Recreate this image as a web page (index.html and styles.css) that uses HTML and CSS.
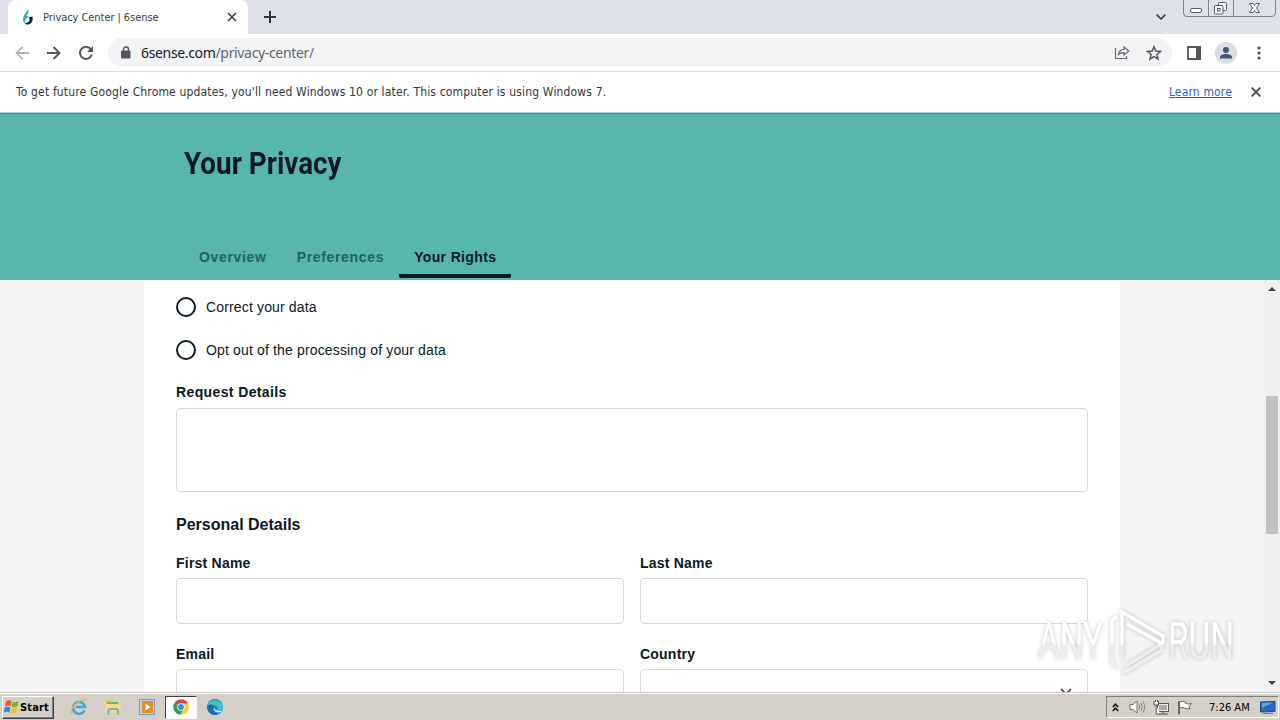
FILE: index.html
```html
<!DOCTYPE html>
<html lang="en">
<head>
  <meta charset="UTF-8">
  <meta name="viewport" content="width=device-width, initial-scale=1.0">
  <title>Privacy Center | 6sense</title>
  <link rel="stylesheet" href="styles.css">
</head>
<body>
  <div class="tab-strip">
    <div class="tab">
      <svg class="favicon" width="16" height="16" viewBox="0 0 16 16">
        <path d="M9 0C6 3 3 6.500 3 10.500c0 1.500.7 3 2 4C4.500 11 6 9 8.500 8V6.500C7.500 7 7 7 6.500 7.500 7 5 9 3.500 9 0z" fill="#2fb5a5"/>
        <path d="M12.500 7.500c.8 4-.8 7-4 8-1.500.3-3-.3-3.500-1.500 2 .3 4-.8 4.500-2.500.4-1.500-.3-2.500-1-3 1.500-.8 3-.8 4-1z" fill="#14213b"/>
      </svg>
      <span class="tab-title">Privacy Center | 6sense</span>
      <svg class="tab-close" width="10" height="10" viewBox="0 0 10 10"><path d="M1 1l8 8M9 1L1 9" stroke="#3c4043" stroke-width="1.600"/></svg>
    </div>
    <svg class="new-tab" width="12" height="12" viewBox="0 0 12 12"><path d="M6 0v12M0 6h12" stroke="#303438" stroke-width="2"/></svg>
    <svg class="tab-search" width="10" height="6" viewBox="0 0 10 6"><path d="M.7.7L5 5 9.300.7" fill="none" stroke="#3c4043" stroke-width="1.700"/></svg>
    <svg class="window-buttons" width="94" height="17" viewBox="0 0 94 17">
      <path d="M.5 0v13q0 3.500 3.500 3.500h85q3.500 0 3.500-3.500V0M25.500 0v16M50.500 0v16" fill="none" stroke="#7f838b"/>
      <rect x="7.500" y="8.500" width="11" height="4" rx="1.500" fill="#fff" stroke="#555b66"/>
      <rect x="35.500" y="2.500" width="8" height="8" rx="1" fill="#fff" stroke="#555b66"/>
      <rect x="31.500" y="5.500" width="8.500" height="8.500" rx="1" fill="#fff" stroke="#555b66"/>
      <rect x="34.500" y="8.500" width="2.500" height="2.500" fill="#fff" stroke="#555b66"/>
      <path d="M66.500 3.500h3.500l1.500 2 1.500-2h3.500L73.500 8l3 4.500H73l-1.500-2-1.500 2h-3.500l3-4.500z" fill="#fff" stroke="#555b66"/>
    </svg>
  </div>

  <div class="toolbar">
    <svg class="nav" width="14" height="14" viewBox="0 0 14 14"><path d="M14 7H1.500M7.500 1L1.500 7l6 6" fill="none" stroke="#b3b5b8" stroke-width="1.800"/></svg>
    <svg class="nav" width="14" height="14" viewBox="0 0 14 14"><path d="M0 7h12.500M6.500 1l6 6-6 6" fill="none" stroke="#54575b" stroke-width="1.900"/></svg>
    <svg class="nav" width="14" height="14" viewBox="0 0 14 14">
      <path d="M12 3.500A6 6 0 1 0 12.800 8.500" fill="none" stroke="#54575b" stroke-width="2"/>
      <path d="M14 0v6H8z" fill="#54575b"/>
    </svg>
    <div class="address-bar">
      <svg class="lock" width="10" height="13" viewBox="0 0 10 13">
        <path d="M2.500 5V3.500a2.500 2.500 0 0 1 5 0V5" fill="none" stroke="#54575b" stroke-width="1.400"/>
        <rect x="0" y="4.500" width="9.500" height="8" rx="1" fill="#54575b"/>
      </svg>
      <span class="url"><b>6sense.com</b>/privacy-center/</span>
      <svg class="share" width="16" height="15" viewBox="0 0 16 15">
        <path d="M1.500 3v10.500h11V11" fill="none" stroke="#65686c" stroke-width="1.200"/>
        <path d="M4.500 9.500C5 6 7 4.500 10 4.400V2l4.800 4-4.800 4V7.600C7.500 7.600 6 8 4.500 9.500z" fill="none" stroke="#65686c" stroke-width="1.200"/>
      </svg>
      <svg class="star" width="16" height="16" viewBox="0 0 16 16"><path d="M8 1.800l1.800 4.300 4.700.4-3.600 3 1.100 4.600-4-2.500-4 2.500 1.100-4.600-3.600-3 4.700-.4z" fill="none" stroke="#54575b" stroke-width="1.500"/></svg>
    </div>
    <svg class="side-panel" width="14" height="14" viewBox="0 0 14 14"><path d="M1 1h12v12H1zM10.500 1v12" fill="none" stroke="#54575b" stroke-width="1.800"/><path d="M9 0h5v14H9z" fill="#54575b"/></svg>
    <svg class="avatar" width="22" height="22" viewBox="0 0 22 22">
      <circle cx="11" cy="11" r="11" fill="#dadde3"/>
      <circle cx="11" cy="8" r="3" fill="#46536e"/>
      <path d="M5 16.500v-1.500c0-2 3.500-3 6-3s6 1 6 3v1.500z" fill="#46536e"/>
    </svg>
    <svg class="menu" width="4" height="14" viewBox="0 0 4 14" fill="#4a4d51"><circle cx="2" cy="2" r="1.600"/><circle cx="2" cy="7" r="1.600"/><circle cx="2" cy="12" r="1.600"/></svg>
  </div>

  <div class="infobar">
    <span class="infobar-text">To get future Google Chrome updates, you'll need Windows 10 or later. This computer is using Windows 7.</span>
    <a class="infobar-link" href="#">Learn more</a>
    <svg class="infobar-close" width="10" height="10" viewBox="0 0 10 10"><path d="M.7.7l8.600 8.600M9.300.7L.7 9.300" stroke="#4b4e52" stroke-width="1.900"/></svg>
  </div>

  <header class="page-header">
    <h1>Your Privacy</h1>
    <nav class="page-tabs">
      <a href="#">Overview</a>
      <a href="#">Preferences</a>
      <a href="#" class="active">Your Rights</a>
    </nav>
  </header>

  <main class="page-body">
    <form class="card">
      <label class="radio"><span class="circle"></span>Correct your data</label>
      <label class="radio"><span class="circle"></span>Opt out of the processing of your data</label>
      <label class="field-label request-label">Request Details</label>
      <div class="input textarea"></div>
      <h2>Personal Details</h2>
      <div class="field-grid">
        <div class="field">
          <label class="field-label">First Name</label>
          <div class="input"></div>
        </div>
        <div class="field">
          <label class="field-label">Last Name</label>
          <div class="input"></div>
        </div>
        <div class="field">
          <label class="field-label">Email</label>
          <div class="input"></div>
        </div>
        <div class="field">
          <label class="field-label">Country</label>
          <div class="input select">
            <svg width="12" height="8" viewBox="0 0 12 8"><path d="M1 1l5 5 5-5" fill="none" stroke="#4c5257" stroke-width="1.800"/></svg>
          </div>
        </div>
      </div>
    </form>

    <div class="scrollbar">
      <svg width="8" height="4" viewBox="0 0 8 4"><path d="M0 4l4-4 4 4z" fill="#404040"/></svg>
      <div class="thumb"></div>
      <svg width="8" height="4" viewBox="0 0 8 4"><path d="M0 0l4 4 4-4z" fill="#404040"/></svg>
    </div>

    <svg class="watermark" width="220" height="76" viewBox="0 0 220 76">
      <defs>
        <linearGradient id="fade" gradientUnits="userSpaceOnUse" x1="0" y1="0" x2="0" y2="76">
          <stop offset=".53" stop-color="#fff"/>
          <stop offset=".56" stop-color="#ececec"/>
          <stop offset="1" stop-color="#f2f2f2"/>
        </linearGradient>
      </defs>
      <g class="watermark-text" fill="url(#fade)">
        <text x="8" y="56" textLength="65" lengthAdjust="spacingAndGlyphs">ANY</text>
        <text x="138" y="56" textLength="66" lengthAdjust="spacingAndGlyphs">RUN</text>
      </g>
      <path class="watermark-logo" stroke="url(#fade)" d="M87 14l-5 3v43l6 4M92 57V9l41 24v7L96 63M97 21l34 19M93 70l39-23v-6"/>
    </svg>
  </main>

  <footer class="taskbar">
    <div class="start">
      <svg width="17" height="16" viewBox="0 0 17 16">
        <path d="M3 2.500q3-2 5.500-.5L7.500 7Q5 6 2 7.500z" fill="#e8562a"/>
        <path d="M9.500 2.500q3 1.500 6-.5l-1 5q-3 2-6 .5z" fill="#72b52c"/>
        <path d="M1.800 8.500q3-1.500 5.500-.2l-1 5.200Q4 12 .8 13.800z" fill="#3183d4"/>
        <path d="M8.300 8.800q3 1.500 6-.5l-1 5.200q-3 2-6 .3z" fill="#f6bd1b"/>
      </svg>
      <span>Start</span>
    </div>
    <div class="quick-launch">
      <svg width="18" height="18" viewBox="0 0 18 18">
        <path d="M14.500 12.500A6 6 0 1 1 15 9H6" fill="none" stroke="#45a5df" stroke-width="2.600"/>
        <path d="M2 15.500C-1 14 3 7 9 3.500c4-2.300 7.500-3 7-.5" fill="none" stroke="#e8bd44" stroke-width="1.400"/>
      </svg>
      <svg width="18" height="18" viewBox="0 0 18 18">
        <path d="M2 2h5l1 2h7v10H2z" fill="#e9c95d"/>
        <path d="M3 4h11v3H3z" fill="#71b56b"/>
        <path d="M1.500 6h15v9h-15z" fill="#f5dc83"/>
        <path d="M4.500 16.500v-4q0-1.500 1.500-1.500h6.500q1.500 0 1.500 1.500v4" fill="none" stroke="#73aedb" stroke-width="2"/>
      </svg>
      <svg width="18" height="18" viewBox="0 0 18 18">
        <rect x="1.500" y="1.500" width="15" height="15" fill="#b5d5ee" stroke="#6d9fc9"/>
        <rect x="4" y="3" width="11" height="12" fill="#f08a1d"/>
        <circle cx="9.500" cy="9" r="5" fill="#f08a1d"/>
        <path d="M7.500 5.500l5 3.500-5 3.500z" fill="#fff"/>
      </svg>
      <div class="task-active">
        <svg width="16" height="16" viewBox="0 0 16 16">
          <path d="M8 8L1.400 4A7.700 7.700 0 0 1 15 4.500z" fill="#de4435"/>
          <path d="M8 8L1.400 4A7.700 7.700 0 0 0 7.500 15.700l3.500-6z" fill="#2da04d"/>
          <path d="M8 4.500h7A7.700 7.700 0 0 1 7.500 15.700L11 10z" fill="#f8cc32"/>
          <circle cx="8" cy="8" r="3.700" fill="#fff"/>
          <circle cx="8" cy="8" r="2.900" fill="#4285dd"/>
        </svg>
      </div>
      <svg width="18" height="18" viewBox="0 0 18 18">
        <circle cx="9" cy="9" r="8" fill="#1578c4"/>
        <path d="M1.200 8A8 8 0 0 1 17 9c0 3-3 4-6 3 1.500-2 0-4.500-3-4.500-3.500 0-5 1.500-6.800.5z" fill="#3fc4bd"/>
        <path d="M8 7.500c-3 2-2 7 3.500 9.200C6 18 1 14 1.200 8.500 3 6 6 6 8 7.500z" fill="#176bb8"/>
        <path d="M8.500 8.500c-1.200 2.500 2 5 7 4 .5-.1.200 1-.5 1.600-4.500 1.800-9-2.100-6.500-5.600z" fill="#e8f5fa"/>
      </svg>
    </div>
    <div class="tray">
      <svg class="tray-more" width="7" height="9" viewBox="0 0 7 9"><path d="M.8 4l2.700-2.800L6.200 4M.8 8l2.700-2.800L6.200 8" fill="none" stroke="#111" stroke-width="1.500"/></svg>
      <svg class="tray-sound" width="17" height="14" viewBox="0 0 17 14">
        <path d="M1 4.500h3l4-3.500v12L4 9.500H1z" fill="#fff" stroke="#707070"/>
        <path d="M10 4.500q1.500 2.500 0 5M12 3q2.500 4 0 8M14 1.500q3.500 5.500 0 11" fill="none" stroke="#858585"/>
      </svg>
      <svg class="tray-net" width="17" height="15" viewBox="0 0 17 15">
        <rect x="4.500" y="3.500" width="11" height="8" fill="#eee" stroke="#555"/>
        <rect x="6" y="5" width="8" height="5" fill="#aaa"/>
        <path d="M6 14h9M10 11v3" stroke="#555"/>
        <path d="M1 1v4h4.500V1M2.500 0v2M4.500 0v2M3.200 5v9h4" fill="#fff" stroke="#555"/>
      </svg>
      <svg class="tray-flag" width="17" height="15" viewBox="0 0 17 15"><path d="M1.500 14V1.500h1V14zM2.500 2q3-1.500 6 0v1.500q3 1 6 0L12 6.500l1 2q-3 1-5.500-.5Q5 7 2.500 8z" fill="#fff" stroke="#666"/></svg>
      <span class="clock">7:26 AM</span>
      <svg class="show-desktop" width="16" height="13" viewBox="0 0 16 13"><path d="M.5 1L15 .5v10L.5 11z" fill="#2869b9" stroke="#17498c"/><path d="M2 2l11-.5L2 7z" fill="#62a0df"/><path d="M3 12.500h10" stroke="#777"/></svg>
    </div>
  </footer>
</body>
</html>
```

FILE: styles.css
```css
* {
  margin: 0;
  padding: 0;
  box-sizing: border-box;
}

body {
  width: 1280px;
  height: 720px;
  overflow: hidden;
  display: flex;
  flex-direction: column;
  background: #fff;
  color: #0a1a23;
  font-family: "Liberation Sans", Arial, sans-serif;
}

svg {
  display: block;
  flex: none;
}

/* browser chrome */
.tab-strip {
  height: 34px;
  flex: none;
  display: flex;
  align-items: center;
  background: #dee1e8;
  padding-left: 8px;
}

.tab {
  width: 240px;
  height: 34px;
  display: flex;
  align-items: center;
  background: #fff;
  border-radius: 8px 8px 0 0;
  padding: 0 11px 0 12px;
}

.tab-title {
  flex: 1;
  margin-left: 7px;
  font-family: "DejaVu Sans Condensed", "DejaVu Sans", sans-serif;
  font-stretch: condensed;
  font-size: 11px;
  letter-spacing: -.06px;
  white-space: nowrap;
  color: #3c4043;
}

.new-tab {
  margin-left: 16px;
}

.tab-search {
  margin-left: auto;
}

.window-buttons {
  align-self: flex-start;
  margin: 0 3px 0 17px;
}

.toolbar {
  height: 38px;
  flex: none;
  display: flex;
  align-items: center;
  border-bottom: 1px solid #d9dadc;
  padding-left: 15px;
}

.nav {
  margin-right: 18px;
}

.address-bar {
  width: 1064px;
  height: 29px;
  margin-left: -3px;
  display: flex;
  align-items: center;
  background: #f1f3f5;
  border-radius: 15px;
  padding: 0 10px 0 13px;
}

.url {
  flex: 1;
  margin-left: 10px;
  font-family: "Noto Sans", sans-serif;
  font-size: 14px;
  letter-spacing: -.34px;
  color: #62666b;
}

.url b {
  font-weight: 400;
  color: #202124;
}

.share {
  margin-right: 16px;
}

.side-panel {
  margin-left: 15px;
}

.avatar {
  margin-left: 14px;
}

.menu {
  margin-left: 20px;
}

.infobar {
  height: 41px;
  flex: none;
  display: flex;
  align-items: center;
  border-bottom: 1px solid #a9d2cb;
  padding: 0 19px 0 16px;
  font-family: "DejaVu Sans Condensed", "DejaVu Sans", sans-serif;
  font-stretch: condensed;
  font-size: 12px;
  letter-spacing: .163px;
  color: #333639;
}

.infobar-text {
  white-space: nowrap;
}

.infobar-link {
  margin-left: auto;
  color: #1f67c0;
}

.infobar-close {
  margin-left: 19px;
}

/* page header */
.page-header {
  height: 167px;
  flex: none;
  background: #58b7ab;
  border-top: 1px solid #4d9188;
  padding: 27px 184px 0;
  display: flex;
  flex-direction: column;
}

h1 {
  align-self: flex-start;
  height: 44px;
  line-height: 44px;
  font-family: Roboto, sans-serif;
  font-size: 32px;
  font-weight: 700;
  transform: scaleX(.87);
  transform-origin: left;
  white-space: nowrap;
}

.page-tabs {
  display: flex;
  margin-top: auto;
  height: 46px;
}

.page-tabs a {
  height: 44px;
  line-height: 46px;
  padding: 0 15px;
  font-size: 14px;
  font-weight: 700;
  letter-spacing: .67px;
  color: #246361;
  text-decoration: none;
  white-space: nowrap;
}

.page-tabs a.active {
  color: #0a1a23;
  letter-spacing: .35px;
  border-bottom: 4px solid #0a1a23;
  border-radius: 2px;
}

/* form */
.page-body {
  height: 412px;
  flex: none;
  position: relative;
  overflow: hidden;
  display: flex;
  justify-content: space-between;
  background: #f5f5f5;
  padding-left: 144px;
}

.card {
  width: 976px;
  height: 470px;
  background: #fff;
  padding: 17px 32px;
}

.radio {
  display: flex;
  align-items: center;
  height: 20px;
  margin-bottom: 23px;
  font-size: 14px;
  letter-spacing: .15px;
}

.circle {
  width: 20px;
  height: 20px;
  border: 2px solid #0a1a23;
  border-radius: 50%;
  margin-right: 10px;
}

.field-label {
  display: block;
  height: 20px;
  line-height: 20px;
  font-size: 14px;
  font-weight: 700;
  letter-spacing: .22px;
}

.request-label {
  margin-top: -1px;
  letter-spacing: .38px;
}

.input {
  height: 46px;
  margin-top: 5px;
  border: 1px solid #d9dadb;
  border-radius: 4px;
}

.input.textarea {
  height: 84px;
  margin-top: 6px;
}

h2 {
  margin-top: 23px;
  height: 20px;
  line-height: 20px;
  font-size: 16px;
  font-weight: 700;
}

.field-grid {
  margin-top: 18px;
  display: grid;
  grid-template-columns: 1fr 1fr;
  gap: 20px 16px;
}

.select {
  display: flex;
  justify-content: flex-end;
  padding: 18px 15px 0 0;
}

.scrollbar {
  width: 16px;
  background: #f0f0f0;
  display: flex;
  flex-direction: column;
  align-items: center;
  padding: 7px 0;
}

.thumb {
  width: 12px;
  height: 138px;
  margin: 105px 0 auto;
  background: #c1c1c1;
}

/* sits over the page, fixed to the lower right */
.watermark {
  position: absolute;
  left: 1030px;
  top: 323px;
  filter: drop-shadow(0 0 2px rgba(0, 0, 0, .22));
}

.watermark-text {
  font-family: Roboto, sans-serif;
  font-size: 51px;
  font-weight: 400;
}

.watermark-logo {
  fill: none;
  stroke-width: 3.5;
}

/* taskbar */
.taskbar {
  height: 28px;
  flex: none;
  display: flex;
  align-items: center;
  background: #d4d0c8;
  border-top: 1px solid #c9c7c3;
  box-shadow: inset 0 1px #fff;
}

.start {
  width: 52px;
  height: 23px;
  margin: 1px 0 0 2px;
  display: flex;
  align-items: center;
  border: 1px solid #fff;
  border-right-color: #404040;
  border-bottom-color: #404040;
  box-shadow: inset -1px -1px #808080;
  font-family: "DejaVu Sans Condensed", "DejaVu Sans", sans-serif;
  font-stretch: condensed;
  font-size: 11px;
  font-weight: 700;
  letter-spacing: .15px;
  color: #000;
}

.quick-launch {
  display: flex;
  align-items: center;
  margin-left: 16px;
  gap: 16px;
}

.task-active {
  width: 32px;
  height: 23px;
  margin: 1px -7px 0;
  display: flex;
  align-items: center;
  justify-content: center;
  background: #fff;
  border: 1px solid #404040;
  border-right-color: #fff;
  border-bottom-color: #fff;
}

.tray {
  width: 173px;
  height: 22px;
  margin: 1px 1px 0 auto;
  display: flex;
  align-items: center;
  border: 1px solid #808080;
  border-right-color: #fff;
  border-bottom-color: #fff;
  padding-left: 5px;
}

.tray-sound {
  margin-left: 10px;
}

.tray-net,
.tray-flag {
  margin-left: 7px;
}

.clock {
  width: 43px;
  margin: 0 8px 0 15px;
  font-family: "DejaVu Sans Condensed", "DejaVu Sans", sans-serif;
  font-stretch: condensed;
  font-size: 11px;
  white-space: nowrap;
  color: #000;
}
```
